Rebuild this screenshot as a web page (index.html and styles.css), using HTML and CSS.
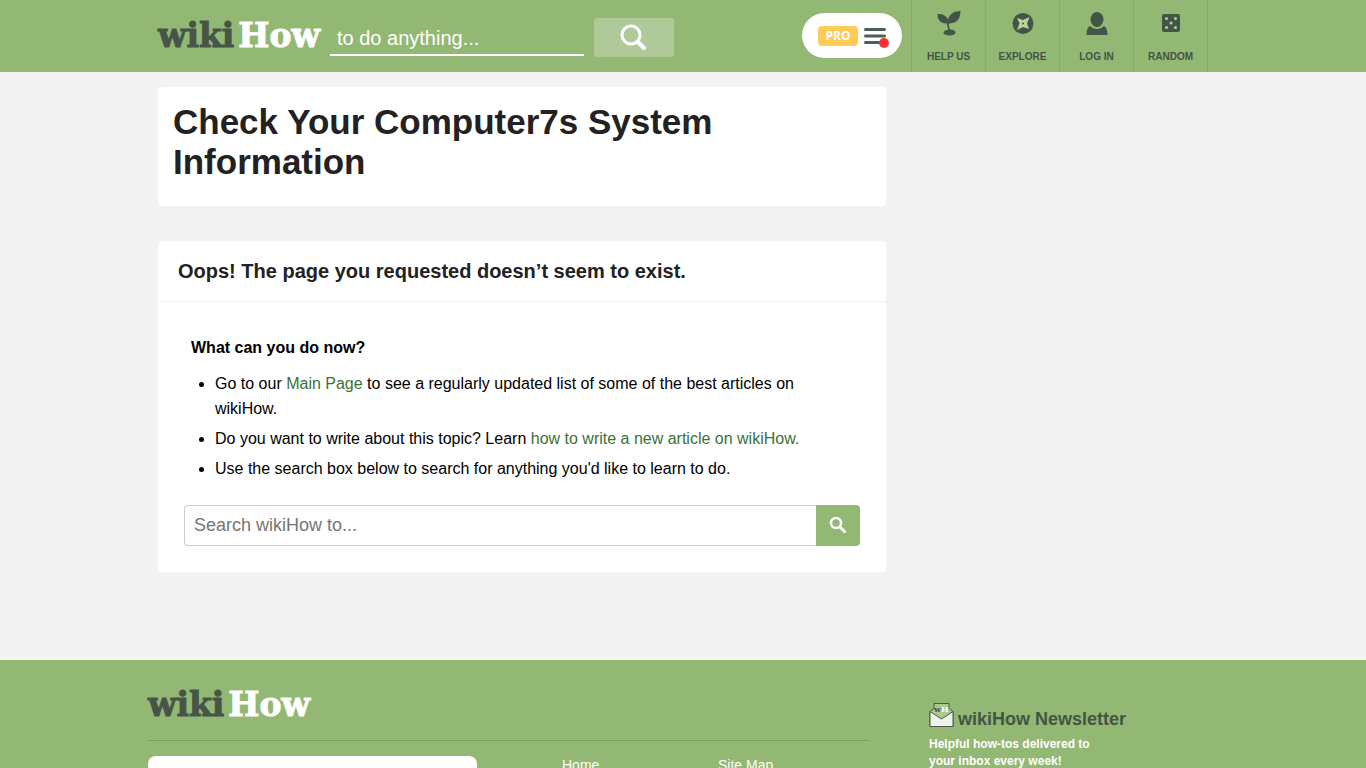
FILE: index.html
```html
<!DOCTYPE html>
<html lang="en">
<head>
    <meta charset="UTF-8">
    <meta name="viewport" content="width=device-width, initial-scale=1.0">
    <title>Check Your Computer7s System Information - wikiHow</title>
    <link rel="stylesheet" href="styles.css">
</head>
<body>
    <header class="header">
        <div class="header-inner">
            <a href="#" class="logo">wiki<span>How</span></a>
            <form class="header-search">
                <input type="text" aria-label="Search" placeholder="to do anything...">
                <button type="submit" aria-label="Search">
                    <svg width="26" height="26" viewBox="0 0 26 26">
                        <circle cx="10" cy="10" r="9" fill="none" stroke="#fff" stroke-width="3"/>
                        <path d="M17 17l6 6" stroke="#fff" stroke-width="4" stroke-linecap="round"/>
                    </svg>
                </button>
            </form>
            <button type="button" class="pro" aria-label="Pro menu">
                <span class="pro-label">PRO</span>
                <svg width="26" height="24" viewBox="0 0 26 24">
                    <path d="M2.5 5.5h19M2.5 12h19M2.5 18.5h19" stroke="#4f5d52" stroke-width="3" stroke-linecap="round"/>
                    <circle cx="21" cy="19" r="5" fill="#fb2f33"/>
                </svg>
            </button>
            <nav class="nav">
                <a href="#">
                    <svg width="26" height="26" viewBox="0 0 26 26" fill="#435546">
                        <path d="M1.5 4c5 0 9 1 10.5 6C13 4 18 1 24.5 1c0 7-3 12-10.5 12.5h-1c0 3 0 4 1.5 6 3 0 5 1.5 5 3 0 2-3 3-6 3s-6-1-6-3c0-1.500 2-2.500 5-3-1-2-1.500-4-1.500-6C5 14 1.500 10 1.500 4z"/>
                    </svg>
                    <span>HELP US</span>
                </a>
                <a href="#">
                    <svg width="26" height="26" viewBox="0 0 26 26">
                        <circle cx="13" cy="13.5" r="10.5" fill="#435546"/>
                        <path d="M7 8l6 2 6.500-3-2.500 6.500 2 5.500-6-2-6 3 2.500-6.500z" fill="#b9d497"/>
                        <circle cx="13" cy="13.500" r="1" fill="#435546"/>
                    </svg>
                    <span>EXPLORE</span>
                </a>
                <a href="#">
                    <svg width="26" height="26" viewBox="0 0 26 26" fill="#435546">
                        <ellipse cx="13" cy="9.500" rx="6.500" ry="7.500"/>
                        <path d="M6 16c4 4 10 4 14 0 2.500 1 3.500 4 3.500 9h-21c0-5 1-8 3.500-9z"/>
                    </svg>
                    <span>LOG IN</span>
                </a>
                <a href="#">
                    <svg width="26" height="26" viewBox="0 0 26 26">
                        <rect x="4" y="4" width="18" height="18" rx="2" fill="#435546"/>
                        <g fill="#b5d095">
                            <circle cx="8.5" cy="8.5" r="1.5"/>
                            <circle cx="17.5" cy="8.5" r="1.5"/>
                            <circle cx="13" cy="13" r="1.5"/>
                            <circle cx="8.5" cy="17.5" r="1.5"/>
                            <circle cx="17.5" cy="17.5" r="1.5"/>
                        </g>
                    </svg>
                    <span>RANDOM</span>
                </a>
            </nav>
        </div>
    </header>

    <main class="main">
        <div class="content">
            <section class="card title-card">
                <h1>Check Your Computer7s System Information</h1>
            </section>
            <section class="card">
                <h2>Oops! The page you requested doesn’t seem to exist.</h2>
                <div class="card-body">
                    <h3>What can you do now?</h3>
                    <ul>
                        <li>Go to our <a href="#">Main Page</a> to see a regularly updated list of some of the best articles on wikiHow.</li>
                        <li>Do you want to write about this topic? Learn <a href="#">how to write a new article on wikiHow.</a></li>
                        <li>Use the search box below to search for anything you'd like to learn to do.</li>
                    </ul>
                    <form class="search-box">
                        <input type="text" aria-label="Search wikiHow" placeholder="Search wikiHow to...">
                        <button type="submit" aria-label="Search">
                            <svg width="18" height="18" viewBox="0 0 18 18" fill="none" stroke="#fff">
                                <circle cx="7" cy="6" r="5" stroke-width="2.5"/>
                                <path d="M10.5 9.5l6 6" stroke-width="3"/>
                            </svg>
                        </button>
                    </form>
                </div>
            </section>
        </div>
    </main>

    <footer class="footer">
        <div class="footer-inner">
            <div class="footer-main">
                <a href="#" class="logo">wiki<span>How</span></a>
                <div class="footer-row">
                    <input type="text" class="footer-search" aria-label="Search">
                    <a href="#">Home</a>
                    <a href="#">Site Map</a>
                </div>
            </div>
            <div class="newsletter">
                <h4>
                    <svg width="25" height="26" viewBox="0 0 25 26">
                        <path d="M1 9.5l4-3v-5h15v5l4 3v15H1z" fill="#a9cb8e" stroke="#4a5a48" stroke-linejoin="round"/>
                        <text x="5" y="10" class="envelope-text">w<tspan fill="#fff">H</tspan></text>
                        <path d="M1 9.5l11.5 7.5L24 9.5v15H1z" fill="#f0f2ee" stroke="#4a5a48" stroke-linejoin="round"/>
                    </svg>
                    wikiHow Newsletter
                </h4>
                <p>Helpful how-tos delivered to<br>your inbox every week!</p>
            </div>
        </div>
    </footer>
</body>
</html>
```
FILE: styles.css
```css
* {
    box-sizing: border-box;
}

body {
    margin: 0;
    font-family: "Liberation Sans", Arial, sans-serif;
    font-size: 16px;
    color: #000;
    background-color: #f3f3f3;
}

h1, h2, h3, h4, p, ul {
    margin: 0;
}

a {
    text-decoration: none;
}

button {
    border: none;
    padding: 0;
    cursor: pointer;
    font-family: inherit;
}

input {
    font-family: inherit;
}

.header {
    background-color: #93b874;
}

.header-inner {
    display: flex;
    max-width: 1050px;
    height: 72px;
    margin: 0 auto;
}

.logo {
    display: block;
    font-family: "DejaVu Serif", serif;
    font-weight: bold;
    font-size: 33px;
    line-height: 40px;
    color: #475549;
    -webkit-text-stroke: 1px;
}

.logo span {
    margin-left: 4px;
    color: #fff;
}

.header .logo {
    width: 172px;
    padding-top: 16px;
}

.header-search {
    display: flex;
    gap: 10px;
    padding-top: 18px;
}

.header-search input {
    width: 254px;
    height: 38px;
    padding: 4px 7px 0;
    border: none;
    border-bottom: 2px solid #fff;
    background: none;
    font-size: 20px;
    color: #fff;
}

.header-search input::placeholder {
    color: #fff;
}

.header-search button {
    width: 80px;
    height: 39px;
    border-radius: 3px;
    background-color: #afca98;
}

.header-search svg {
    display: block;
    margin: 0 auto;
    overflow: visible;
}

.pro {
    display: flex;
    align-items: center;
    gap: 5px;
    width: 100px;
    height: 45px;
    margin: 13px 9px 0 auto;
    padding-left: 16px;
    border-radius: 23px;
    background-color: #fff;
}

.pro-label {
    width: 40px;
    border-radius: 4px;
    font-family: "Open Sans", sans-serif;
    font-size: 12px;
    font-weight: bold;
    line-height: 20px;
    color: #fff;
    background-color: #ffcb57;
}

.nav {
    display: flex;
    border-left: 1px solid #86ab68;
}

.nav a {
    display: flex;
    flex-direction: column;
    align-items: center;
    gap: 15px;
    width: 74px;
    padding-top: 10px;
    border-right: 1px solid #86ab68;
    font-size: 10px;
    font-weight: bold;
    line-height: 12px;
    color: #435546;
}

.main {
    max-width: 1050px;
    margin: 0 auto;
    padding: 15px 0 88px;
}

.content {
    display: flex;
    flex-direction: column;
    gap: 35px;
    max-width: 728px;
}

.card {
    border-radius: 4px;
    background-color: #fff;
}

.title-card {
    padding: 15px 120px 24px 15px;
}

h1 {
    font-size: 35px;
    line-height: 40px;
    color: #222;
}

h2 {
    padding: 15px 20px;
    border-bottom: 1px solid #f2f2f2;
    font-size: 20px;
    line-height: 30px;
    color: #222;
}

.card-body {
    padding: 33px 26px 26px;
}

h3 {
    padding-left: 7px;
    font-size: 16px;
    line-height: 26px;
}

.card ul {
    padding: 10px 30px 0 31px;
    line-height: 25px;
}

.card li {
    margin-bottom: 5px;
}

.card li a {
    color: #3a7238;
}

.search-box {
    display: flex;
    margin-top: 24px;
}

.search-box input {
    flex: 1;
    height: 41px;
    padding: 0 9px;
    border: 1px solid #ccc;
    border-right: none;
    border-radius: 4px 0 0 4px;
    font-size: 18px;
}

.search-box button {
    width: 44px;
    border-radius: 0 4px 4px 0;
    background-color: #93b874;
}

.search-box svg {
    display: block;
    margin: 0 auto;
    overflow: visible;
}

.footer {
    background-color: #93b874;
}

.footer-inner {
    display: flex;
    justify-content: space-between;
    max-width: 1070px;
    margin: 0 auto;
    padding-top: 25px;
}

.footer-main {
    width: 721px;
}

.footer .logo {
    padding-bottom: 15px;
    border-bottom: 1px solid #7ba05e;
}

.footer-row {
    display: grid;
    grid-template-columns: 329px 71px 1fr;
    column-gap: 85px;
    padding: 15px 0;
}

.footer-row a {
    font-size: 14px;
    line-height: 18px;
    color: #fff;
}

.footer-search {
    height: 44px;
    border: none;
    border-radius: 8px;
    background-color: #fff;
}

.newsletter {
    width: 289px;
    padding-top: 17px;
}

.newsletter h4 {
    display: flex;
    align-items: center;
    gap: 4px;
    font-size: 18px;
    line-height: 34px;
    color: #435546;
}

.newsletter svg {
    margin-bottom: 8px;
}

.envelope-text {
    font-family: "DejaVu Serif", serif;
    font-size: 8px;
    font-weight: bold;
    fill: #435546;
}

.newsletter p {
    font-size: 12px;
    font-weight: bold;
    line-height: 17px;
    color: #fff;
}
```
